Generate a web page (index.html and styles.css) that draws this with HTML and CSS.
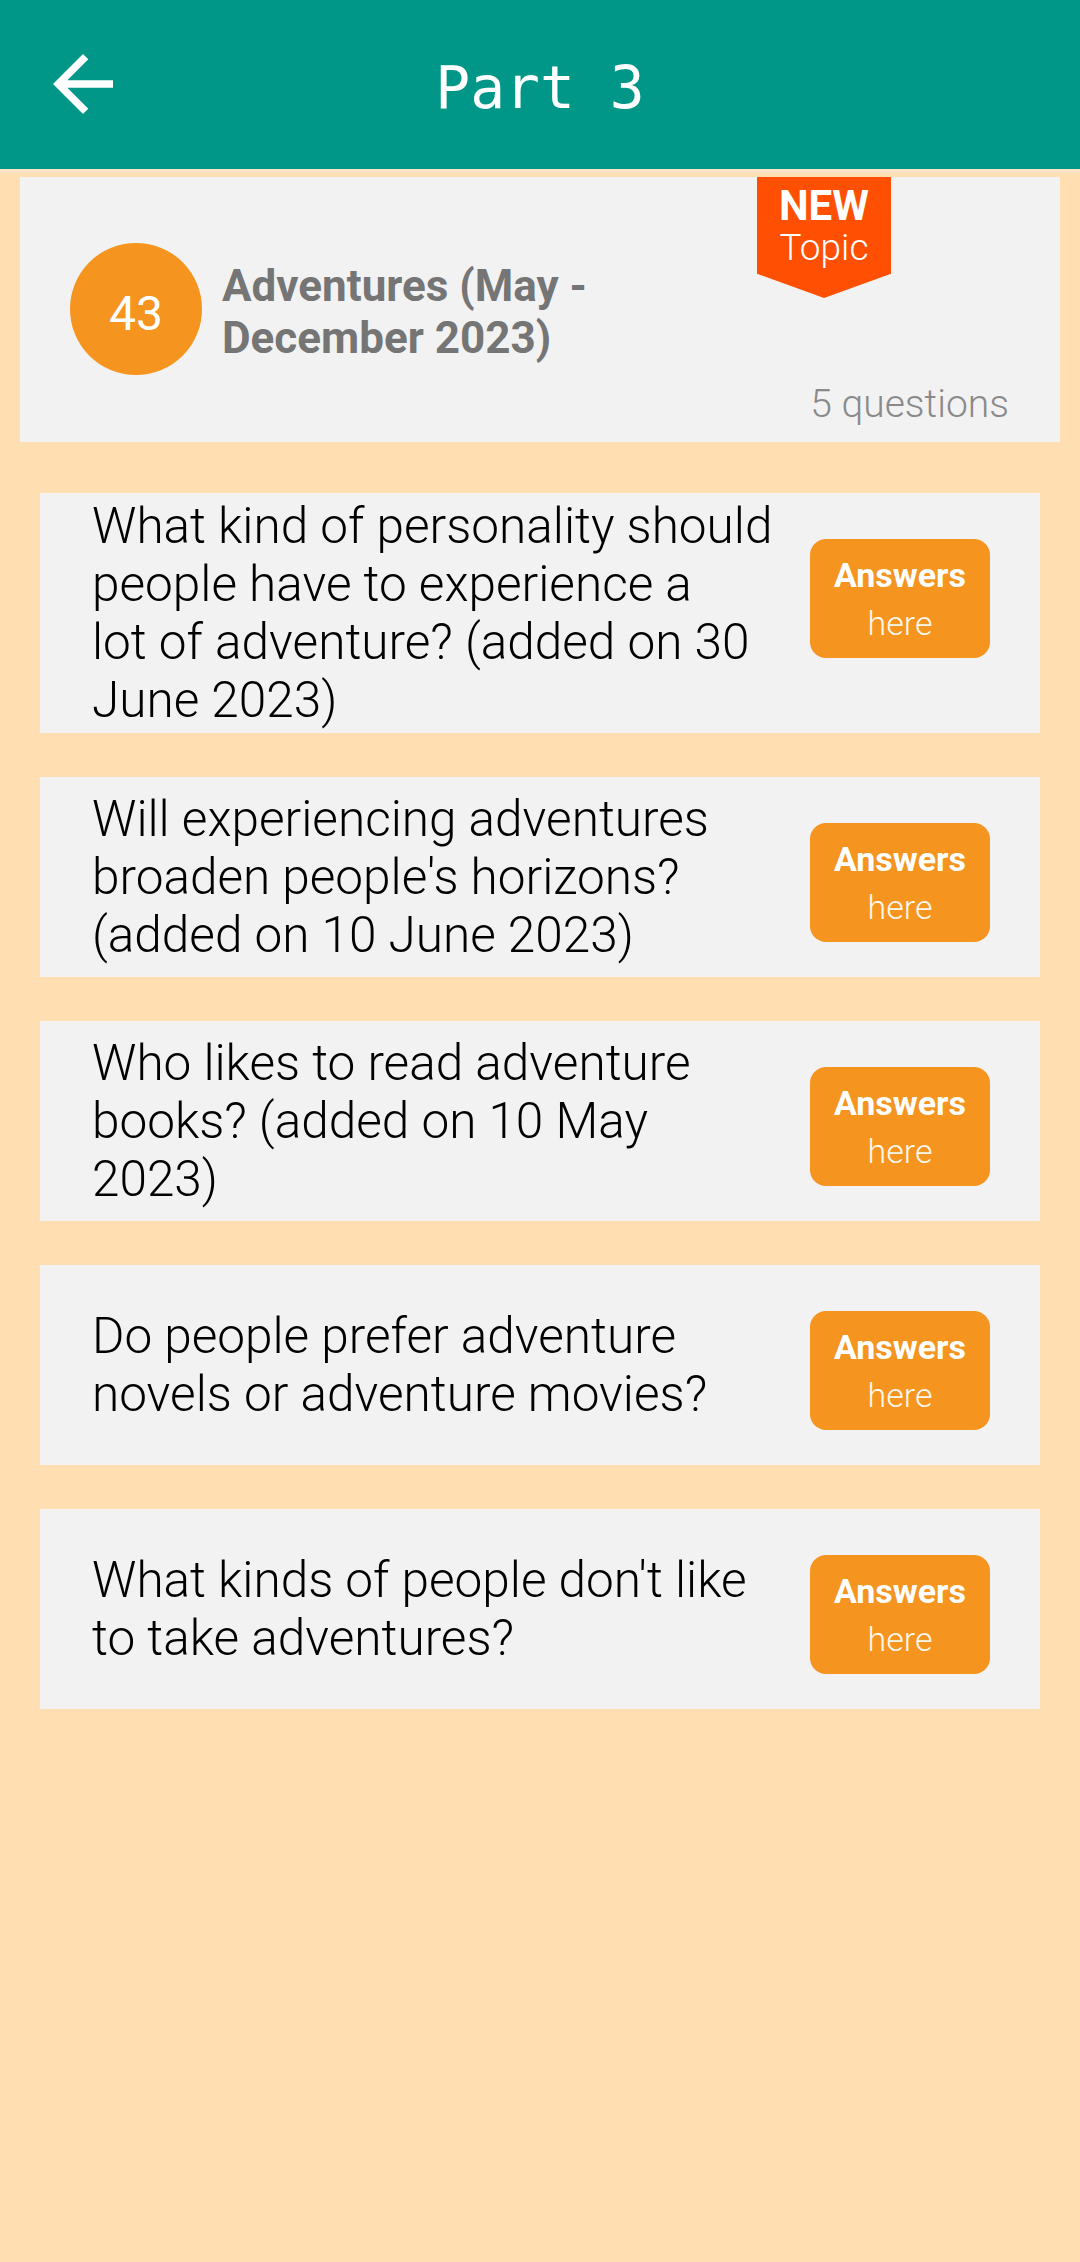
FILE: index.html
```html
<!DOCTYPE html>
<html lang="en">
<head>
<meta charset="utf-8">
<title>Part 3</title>
<link rel="stylesheet" href="styles.css">
</head>
<body>
<header class="appbar">
  <div class="appbar-left">
    <svg class="back" viewBox="0 0 24 24" width="90" height="90" aria-hidden="true"><path fill="#fff" d="M20 11H7.83l5.59-5.59L12 4l-8 8 8 8 1.41-1.41L7.83 13H20v-2z"/></svg>
  </div>
  <h1 class="appbar-title">Part 3</h1>
  <div class="appbar-right"></div>
</header>

<main class="content">
  <section class="topic">
    <div class="ribbon"><p class="ribbon-text"><span class="ribbon-new">NEW</span><br><span class="ribbon-topic">Topic</span></p></div>
    <div class="topic-main">
      <div class="topic-num">43</div>
      <h2 class="topic-title">Adventures (May - December 2023)</h2>
    </div>
    <div class="topic-count">5 questions</div>
  </section>

  <ul class="questions">
    <li class="q">
      <p class="q-text">What kind of personality should<br>people have to experience a<br>lot of adventure? (added on 30<br>June 2023)</p>
      <a class="q-btn"><span class="btn-main">Answers</span><span class="btn-sub">here</span></a>
    </li>
    <li class="q">
      <p class="q-text">Will experiencing adventures<br>broaden people's horizons?<br>(added on 10 June 2023)</p>
      <a class="q-btn"><span class="btn-main">Answers</span><span class="btn-sub">here</span></a>
    </li>
    <li class="q">
      <p class="q-text">Who likes to read adventure<br>books? (added on 10 May<br>2023)</p>
      <a class="q-btn"><span class="btn-main">Answers</span><span class="btn-sub">here</span></a>
    </li>
    <li class="q">
      <p class="q-text">Do people prefer adventure<br>novels or adventure movies?</p>
      <a class="q-btn"><span class="btn-main">Answers</span><span class="btn-sub">here</span></a>
    </li>
    <li class="q">
      <p class="q-text">What kinds of people don't like<br>to take adventures?</p>
      <a class="q-btn"><span class="btn-main">Answers</span><span class="btn-sub">here</span></a>
    </li>
  </ul>
</main>
</body>
</html>
```

FILE: styles.css
```css
* { box-sizing: border-box; }

html, body {
  margin: 0;
  padding: 0;
}

body {
  background: #ffdfb2;
  font-family: Roboto, "Noto Sans", "Liberation Sans", sans-serif;
  min-height: 2262px;
}

.appbar {
  height: 173px;
  background: #009688;
  border-bottom: 1px solid #2a8c7c;
  display: grid;
  grid-template-columns: 1fr auto 1fr;
  align-items: center;
}

.appbar-left {
  padding-left: 38px;
  display: flex;
  align-items: center;
  margin-top: -4px;
}

.back { display: block; }

.appbar-title {
  margin: 0;
  font-family: "DejaVu Sans Mono", "Liberation Mono", monospace;
  font-weight: normal;
  font-size: 58px;
  color: #fff;
  letter-spacing: 0;
  margin-top: 4px;
}

.content {
  padding-top: 4px;
  border-top: 4px solid #fbe4c3;
  margin-top: -4px;
}

.topic {
  position: relative;
  margin: 0 20px;
  background: #f2f2f2;
  padding: 66px 51px 15px 50px;
}

.ribbon {
  position: absolute;
  top: 0;
  left: 737px;
  width: 134px;
  height: 121px;
  background: #ff4f03;
  clip-path: polygon(0 0, 100% 0, 100% 80%, 50% 100%, 0 80%);
  color: #fff;
}

.ribbon-text {
  margin: 9px 0 0;
  text-align: center;
  font-size: 37px;
  line-height: 40px;
}

.ribbon-new {
  font-weight: 700;
  font-size: 42px;
}

.ribbon-topic {
  font-weight: 300;
  font-size: 37px;
}

.topic-main {
  display: flex;
  align-items: center;
  gap: 20px;
}

.topic-num {
  flex: none;
  width: 132px;
  height: 132px;
  border-radius: 50%;
  background: #f5941f;
  color: #fff;
  font-size: 48px;
  display: flex;
  align-items: center;
  justify-content: center;
  padding-top: 8px;
}

.topic-title {
  margin: 0;
  max-width: 420px;
  font-size: 44px;
  line-height: 52px;
  font-weight: 700;
  color: #757575;
  padding-top: 6px;
}

.topic-count {
  margin-top: 6px;
  text-align: right;
  font-size: 39px;
  font-weight: 300;
  color: #8a8a8a;
}

.questions {
  list-style: none;
  margin: 51px 40px 0;
  padding: 0;
  display: flex;
  flex-direction: column;
  gap: 44px;
}

.q {
  background: #f2f2f2;
  min-height: 200px;
  display: flex;
  align-items: flex-start;
  padding-left: 52px;
}

.q-text {
  flex: 1;
  align-self: center;
  margin: 0;
  padding: 4px 0;
  font-size: 49.5px;
  font-weight: 300;
  line-height: 58px;
  color: #000;
  white-space: nowrap;
}

.q-btn {
  flex: none;
  width: 180px;
  height: 119px;
  margin: 46px 50px 0 20px;
  background: #f5941f;
  border-radius: 16px;
  display: flex;
  flex-direction: column;
  align-items: center;
  justify-content: center;
  color: #fff;
  font-size: 34px;
  line-height: 48px;
}

.btn-main { font-weight: 700; }
.btn-sub { font-weight: 300; color: #fff7ea; }
```
